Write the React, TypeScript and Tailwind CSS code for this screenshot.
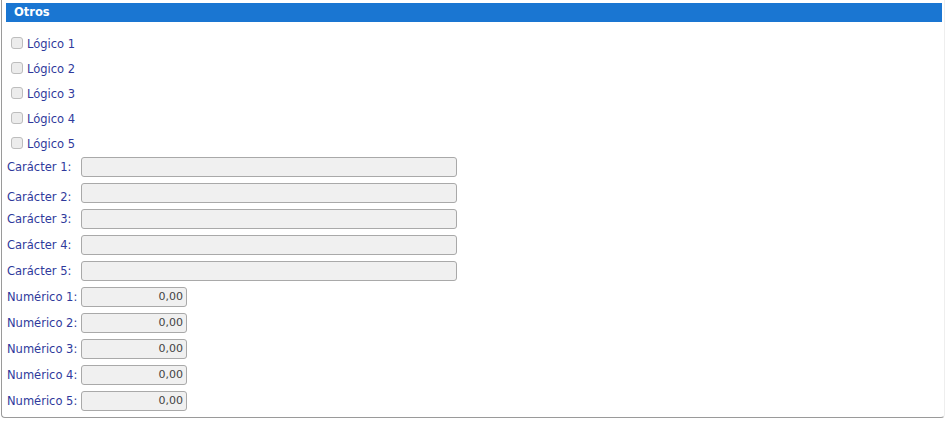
const logicos = ['Lógico 1', 'Lógico 2', 'Lógico 3', 'Lógico 4', 'Lógico 5']
const caracteres = ['Carácter 1:', 'Carácter 2:', 'Carácter 3:', 'Carácter 4:', 'Carácter 5:']
const numericos = ['Numérico 1:', 'Numérico 2:', 'Numérico 3:', 'Numérico 4:', 'Numérico 5:']

function FieldRow({ label, wide, value, shift }: { label: string, wide?: boolean, value?: string, shift?: boolean }) {
  return (
    <div className="flex h-[26px] items-start">
      <span className={`w-[74px] shrink-0 leading-[21px] text-[#2f3a9c] ${shift ? 'mt-[4px]' : ''}`}>{label}</span>
      <div
        className={`h-[20px] rounded-[3px] border border-[#a9a9a9] bg-[#f0f0f0] px-[3px] text-right text-[11px] leading-[18px] text-[#444] ${wide ? 'w-[376px]' : 'w-[106px]'}`}
      >
        {value}
      </div>
    </div>
  )
}

export default function App() {
  return (
    <div className="h-[423px] w-[946px] overflow-hidden bg-white text-[11.5px]" style={{ fontFamily: '"DejaVu Sans", Verdana, sans-serif' }}>
      <div className="ml-[1px] h-[418px] w-[944px] rounded-b-[4px] border-b border-l border-r border-b-[#9a9a9a] border-l-[#9a9a9a] border-r-[#eeeeee] pl-[4px] pt-[3px]">
        <div className="h-[19px] w-[936px] bg-[#1a76d2] pl-[8px] font-bold leading-[19px] text-white">Otros</div>
        <div className="mt-[10px] flex flex-col pl-[5px]">
          {logicos.map((l) => (
            <div key={l} className="flex h-[25px] items-center">
              <span className="mb-[3px] h-[12px] w-[12px] rounded-[3px] border border-[#bdbdbd] bg-[#ececec]" />
              <span className="ml-[4px] text-[#2f3a9c]">{l}</span>
            </div>
          ))}
        </div>
        <div className="flex flex-col pl-[1px]">
          {caracteres.map((c, i) => (
            <FieldRow key={c} label={c} wide shift={i === 1} />
          ))}
          {numericos.map((n) => (
            <FieldRow key={n} label={n} value="0,00" />
          ))}
        </div>
      </div>
    </div>
  )
}
